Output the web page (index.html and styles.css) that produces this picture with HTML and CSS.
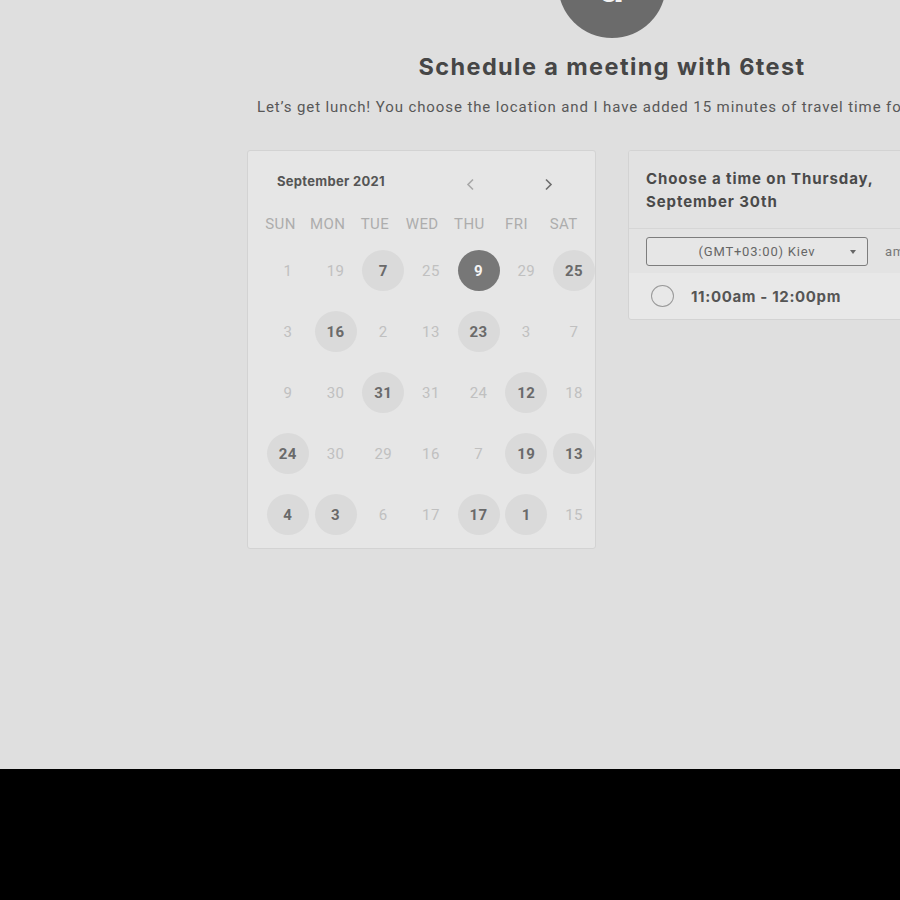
FILE: index.html
```html
<!DOCTYPE html>
<html lang="en">
<head>
<meta charset="utf-8">
<title>Schedule a meeting with 6test</title>
<link rel="stylesheet" href="styles.css">
</head>
<body>
<div class="page">
  <div class="stage">
    <div class="avatar"><span>a</span></div>
    <h1 class="title">Schedule a meeting with 6test</h1>
    <p class="subtitle">Let’s get lunch! You choose the location and I have added 15 minutes of travel time for us two.</p>
    <div class="content">
      <section class="calendar">
        <div class="cal-head">
          <div class="month">September 2021</div>
          <button class="nav nav-prev" aria-label="Previous month">
            <svg width="9" height="13" viewBox="0 0 9 13"><path d="M7 1.5 L2 6.5 L7 11.5" fill="none" stroke="currentColor" stroke-width="1.6"/></svg>
          </button>
          <button class="nav nav-next" aria-label="Next month">
            <svg width="9" height="13" viewBox="0 0 9 13"><path d="M2 1.5 L7 6.5 L2 11.5" fill="none" stroke="currentColor" stroke-width="1.6"/></svg>
          </button>
        </div>
        <div class="weekdays">
          <span>SUN</span><span>MON</span><span>TUE</span><span>WED</span><span>THU</span><span>FRI</span><span>SAT</span>
        </div>
        <div class="dates">
          <span class="d">1</span><span class="d">19</span><span class="d av">7</span><span class="d">25</span><span class="d sel">9</span><span class="d">29</span><span class="d av">25</span>
          <span class="d">3</span><span class="d av">16</span><span class="d">2</span><span class="d">13</span><span class="d av">23</span><span class="d">3</span><span class="d">7</span>
          <span class="d">9</span><span class="d">30</span><span class="d av">31</span><span class="d">31</span><span class="d">24</span><span class="d av">12</span><span class="d">18</span>
          <span class="d av">24</span><span class="d">30</span><span class="d">29</span><span class="d">16</span><span class="d">7</span><span class="d av">19</span><span class="d av">13</span>
          <span class="d av">4</span><span class="d av">3</span><span class="d">6</span><span class="d">17</span><span class="d av">17</span><span class="d av">1</span><span class="d">15</span>
        </div>
      </section>
      <section class="times">
        <div class="times-head">Choose a time on Thursday, September 30th</div>
        <div class="tz-row">
          <div class="tz-select">
            <span>(GMT+03:00) Kiev</span>
            <span class="caret"></span>
          </div>
          <span class="fmt">am/pm</span>
        </div>
        <div class="slot">
          <span class="radio"></span>
          <span class="slot-label">11:00am - 12:00pm</span>
        </div>
      </section>
    </div>
  </div>
</div>
</body>
</html>
```
FILE: styles.css
```css
html, body {
  margin: 0;
  padding: 0;
  background: #000;
  overflow: hidden;
}

.page {
  width: 900px;
  height: 769px;
  background: #dfdfdf;
  overflow: hidden;
  font-family: Roboto, "Liberation Sans", sans-serif;
}

.stage {
  width: 1224px;
  display: flex;
  flex-direction: column;
  align-items: center;
}

.avatar {
  width: 108px;
  height: 108px;
  border-radius: 50%;
  background: #6b6b6b;
  margin-top: -70px;
  display: flex;
  align-items: center;
  justify-content: center;
}

.avatar span {
  color: #f2f2f2;
  font-family: Inter, "Liberation Sans", sans-serif;
  font-weight: 700;
  font-size: 42px;
  line-height: 1;
  margin-top: 5px;
}

.title {
  margin: 14px 0 0;
  font-family: Inter, "Liberation Sans", sans-serif;
  font-weight: 700;
  font-size: 23.5px;
  letter-spacing: 1.4px;
  line-height: 30px;
  color: #464646;
}

.subtitle {
  margin: 15px 0 0;
  font-size: 15px;
  letter-spacing: 0.9px;
  line-height: 20px;
  color: #585858;
  white-space: nowrap;
}

.content {
  margin-top: 33px;
  display: flex;
  gap: 32px;
  align-items: flex-start;
}

/* Calendar */
.calendar {
  box-sizing: border-box;
  width: 349px;
  height: 399px;
  background: #e6e6e6;
  border: 1px solid #d3d3d3;
  border-radius: 3px;
  overflow: hidden;
  padding-top: 15px;
}

.cal-head {
  height: 30px;
  display: flex;
  align-items: center;
  padding-left: 29px;
  padding-right: 27px;
}

.month {
  flex: 1;
  font-family: Inter, "Liberation Sans", sans-serif;
  font-weight: 700;
  font-size: 13px;
  letter-spacing: 0.3px;
  color: #555;
}

.nav {
  width: 40px;
  height: 30px;
  border: 0;
  background: transparent;
  padding: 0;
  display: flex;
  align-items: center;
  justify-content: center;
  margin-top: 6px;
}

.nav-prev { color: #a8a8a8; }
.nav-next { color: #6e6e6e; margin-left: 38px; }

.weekdays {
  margin-top: 18px;
  margin-left: 9px;
  display: grid;
  grid-template-columns: repeat(7, 47.2px);
  height: 20px;
  align-items: center;
}

.weekdays span {
  text-align: center;
  font-size: 15px;
  color: #adadad;
  letter-spacing: 0.4px;
}

.dates {
  margin-top: 6px;
  margin-left: 16px;
  display: grid;
  grid-template-columns: repeat(7, 47.7px);
  grid-auto-rows: 61px;
  width: 334px;
}

.d {
  justify-self: center;
  align-self: center;
  width: 42px;
  height: 41px;
  border-radius: 50%;
  display: flex;
  align-items: center;
  justify-content: center;
  font-size: 15px;
  letter-spacing: 0.4px;
  color: #c0c0c0;
}

.d.av {
  background: #dadada;
  color: #6a6a6a;
  font-weight: 700;
}

.d.sel {
  background: #777;
  color: #f4f4f4;
  font-weight: 700;
}

/* Times panel */
.times {
  box-sizing: border-box;
  width: 349px;
  background: #e8e8e8;
  border: 1px solid #d3d3d3;
  border-radius: 3px;
  overflow: hidden;
}

.times-head {
  background: #e2e2e2;
  padding: 16px 17px 15px;
  font-family: Inter, "Liberation Sans", sans-serif;
  font-weight: 700;
  font-size: 15px;
  letter-spacing: 0.9px;
  line-height: 23px;
  color: #4a4a4a;
  border-bottom: 1px solid #d6d6d6;
  width: 280px;
}

.tz-row {
  background: #e3e3e3;
  display: flex;
  align-items: center;
  gap: 17px;
  padding: 8px 17px 7px;
}

.tz-select {
  box-sizing: border-box;
  width: 222px;
  height: 29px;
  border: 1px solid #7d7d7d;
  border-radius: 3px;
  background: #e6e6e6;
  display: flex;
  align-items: center;
  justify-content: center;
  position: relative;
  font-size: 13px;
  letter-spacing: 0.8px;
  color: #666;
}

.caret {
  position: absolute;
  right: 11px;
  top: 12px;
  width: 0;
  height: 0;
  border-left: 3.5px solid transparent;
  border-right: 3.5px solid transparent;
  border-top: 4px solid #666;
}

.fmt {
  font-size: 13px;
  letter-spacing: 0.8px;
  color: #777;
  white-space: nowrap;
}

.slot {
  height: 46px;
  display: flex;
  align-items: center;
  padding-left: 22px;
  gap: 17px;
}

.radio {
  box-sizing: border-box;
  width: 23px;
  height: 22px;
  border: 1.5px solid #9a9a9a;
  border-radius: 50%;
}

.slot-label {
  font-family: Inter, "Liberation Sans", sans-serif;
  font-weight: 700;
  font-size: 15px;
  letter-spacing: 0.65px;
  color: #555;
}
```
